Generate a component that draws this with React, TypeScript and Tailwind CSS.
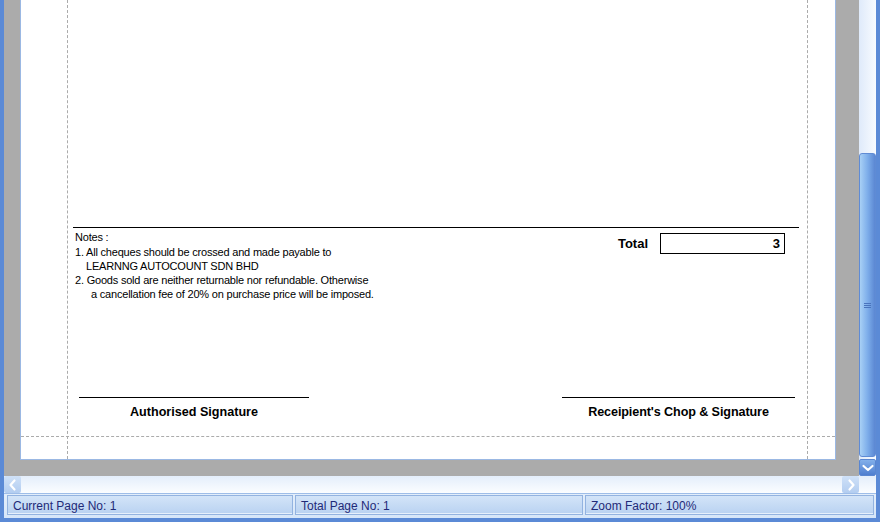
import React from 'react';

const notes = [
  { text: 'Notes :', indent: 'pl-0', h: 'h-[15px]' },
  { text: '1. All cheques should be crossed and made payable to', indent: 'pl-0', h: 'h-[14px]' },
  { text: 'LEARNNG AUTOCOUNT SDN BHD', indent: 'pl-[11px]', h: 'h-[14px]' },
  { text: '2. Goods sold are neither returnable nor refundable. Otherwise', indent: 'pl-0', h: 'h-[14px]' },
  { text: 'a cancellation fee of 20% on purchase price will be imposed.', indent: 'pl-[16px]', h: 'h-[14px]' },
];

function Chevron({ dir, className }: { dir: 'down' | 'left' | 'right'; className?: string }) {
  const d =
    dir === 'down' ? 'M2.5 5 L7 9 L11.5 5' : dir === 'left' ? 'M8.5 2.5 L4.5 7 L8.5 11.5' : 'M5.5 2.5 L9.5 7 L5.5 11.5';
  return (
    <svg width="14" height="14" viewBox="0 0 14 14" className={className}>
      <path d={d} fill="none" stroke="white" strokeWidth="2.2" strokeLinecap="round" strokeLinejoin="round" />
    </svg>
  );
}

function StatusPanel({ label, className }: { label: string; className: string }) {
  return (
    <div
      className={`${className} h-[20px] flex items-center pl-[5px] pt-[1px] border border-[#93b3e0] bg-gradient-to-b from-[#d3e4f8] to-[#b9d2f1] shadow-[inset_0_-1px_0_#e6f0fc] text-[12px] text-[#1f2a78]`}
    >
      {label}
    </div>
  );
}

export default function App() {
  return (
    <div className="w-[880px] h-[522px] flex flex-col bg-[#5b8ad6] border-l-[4px] border-r-[4px] border-b-[4px] border-[#5b8ad6] font-['Liberation_Sans',Arial,sans-serif]">
      {/* viewport + vertical scrollbar */}
      <div className="h-[476px] flex">
        <div className="w-[855px] h-full bg-[#ababab] pl-[16px]">
          <div className="w-[816px] h-[460px] border-l border-r border-b border-[#9bb8e3] bg-white">
            <div className="relative w-[814px] h-[459px]">
              {/* margin guides */}
              <div className="absolute left-[46px] top-0 bottom-0 border-l border-dashed border-[#ababab]" />
              <div className="absolute left-[786px] top-0 bottom-0 border-l border-dashed border-[#ababab]" />
              <div className="absolute left-0 right-0 top-[436px] border-t border-dashed border-[#ababab]" />

              <div className="pt-[227px] pl-[52px]">
                <div className="w-[726px] border-t border-black">
                  <div className="h-[169px] flex justify-between">
                    <div className="pt-[2px] pl-[2px] text-[11px] leading-[14px] text-black tracking-[-0.2px]">
                      {notes.map((n, i) => (
                        <div key={i} className={`${n.indent} ${n.h} whitespace-nowrap`}>
                          {n.text}
                        </div>
                      ))}
                    </div>
                    <div className="pt-[5px] pr-[14px] flex items-start">
                      <div className="h-[21px] flex items-center font-bold text-[13px] text-black mr-[12px]">Total</div>
                      <div className="w-[125px] h-[21px] border border-black flex items-center justify-end pr-[4px] font-bold text-[13px] text-black">
                        3
                      </div>
                    </div>
                  </div>
                  <div className="flex justify-between">
                    <div className="ml-[6px] w-[230px] border-t border-black pt-[6px] text-center font-bold text-[12.6px] leading-[16px] text-black">
                      Authorised Signature
                    </div>
                    <div className="mr-[4px] w-[233px] border-t border-black pt-[6px] text-center font-bold text-[12.6px] leading-[16px] text-black tracking-[-0.1px]">
                      Receipient's Chop &amp; Signature
                    </div>
                  </div>
                </div>
              </div>
            </div>
          </div>
        </div>

        {/* vertical scrollbar */}
        <div className="w-[17px] h-full flex flex-col bg-gradient-to-r from-[#dfeafa] to-[#f8fbff]">
          <div className="h-[153px]" />
          <div className="h-[304px] rounded-[3px] border border-[#5f8bd4] bg-gradient-to-r from-[#a8d0f5] via-[#7eaeea] to-[#5b87d3] flex items-center justify-center">
            <div className="flex flex-col gap-[1px]">
              <div className="w-[7px] h-[1px] bg-[#4a74bd]" />
              <div className="w-[7px] h-[1px] bg-[#4a74bd]" />
              <div className="w-[7px] h-[1px] bg-[#4a74bd]" />
            </div>
          </div>
          <div className="h-[2px]" />
          <div className="h-[17px] rounded-[2px] border border-[#5a86d0] bg-gradient-to-b from-[#83b0ea] to-[#4f7ecf] flex items-center justify-center">
            <Chevron dir="down" />
          </div>
        </div>
      </div>

      {/* horizontal scrollbar */}
      <div className="h-[17px] flex bg-gradient-to-b from-[#e4eefb] to-[#fbfdff]">
        <div className="w-[855px] flex justify-between">
          <div className="w-[17px] h-[17px] rounded-[2px] bg-gradient-to-b from-[#cfe1f8] to-[#b3cdf0] flex items-center justify-center">
            <Chevron dir="left" />
          </div>
          <div className="w-[17px] h-[17px] rounded-[2px] bg-gradient-to-b from-[#cfe1f8] to-[#b3cdf0] flex items-center justify-center">
            <Chevron dir="right" />
          </div>
        </div>
        <div className="w-[17px]" />
      </div>

      {/* status bar */}
      <div className="h-[25px] border-t border-[#9ebde8] bg-gradient-to-b from-[#e3eefb] to-[#d6e6f9] flex pt-[1px] pl-[3px]">
        <StatusPanel label="Current Page No: 1" className="w-[286px]" />
        <div className="w-[2px]" />
        <StatusPanel label="Total Page No: 1" className="w-[288px]" />
        <div className="w-[2px]" />
        <StatusPanel label="Zoom Factor: 100%" className="w-[289px]" />
      </div>
    </div>
  );
}
